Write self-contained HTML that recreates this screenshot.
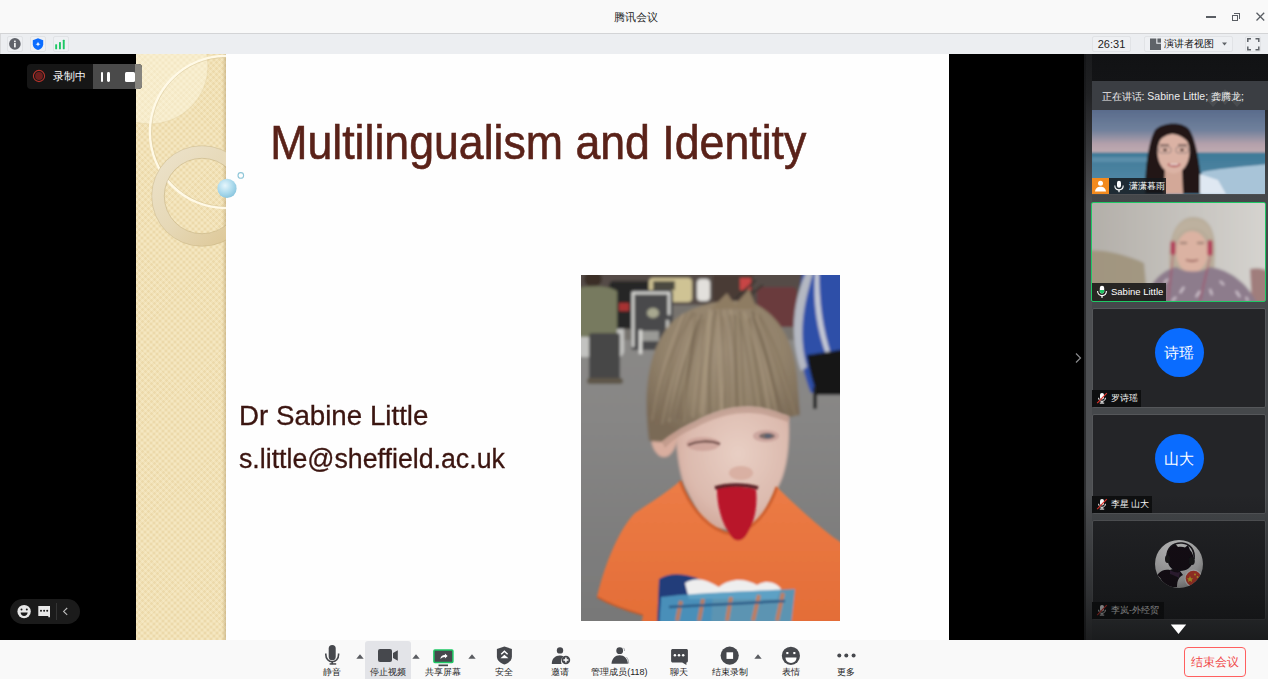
<!DOCTYPE html>
<html><head><meta charset="utf-8">
<style>
*{box-sizing:border-box;margin:0;padding:0}
html,body{width:1268px;height:679px;overflow:hidden;background:#000;font-family:"Liberation Sans",sans-serif}
.a{position:absolute}
#titlebar{left:0;top:0;width:1268px;height:33px;background:#f9f9f9}
#tline{left:0;top:33px;width:1268px;height:1px;background:#d3d4d6}
#strip{left:0;top:34px;width:1268px;height:20px;background:#eceef1}
.sbtn{border:1px solid #e1e3e6;border-radius:2px;background:#eef0f3}
#main{left:0;top:54px;width:1268px;height:586px;background:#000}
#bottom{left:0;top:640px;width:1268px;height:39px;background:#f9f9f9}
.lbl{font-size:10px;color:#1e1e1e;white-space:nowrap;text-align:center}
</style></head><body>
<div id="titlebar" class="a"></div>
<div class="a" style="left:614px;top:10.5px;font-size:11.4px;line-height:13px;color:#222;">腾讯会议</div>
<!-- window controls -->
<div class="a" style="left:1206px;top:16px;width:10px;height:1.5px;background:#5a5e64"></div>
<div class="a" style="left:1233.5px;top:13px;width:6.5px;height:6px;border-top:1.3px solid #5a5e64;border-right:1.3px solid #5a5e64"></div>
<div class="a" style="left:1231.5px;top:15px;width:6.5px;height:6px;border:1.4px solid #5a5e64"></div>
<svg class="a" style="left:1255px;top:11px" width="11" height="11" viewBox="0 0 11 11"><path d="M1.5 1.8L9.2 9.5M9.2 1.8L1.5 9.5" stroke="#5a5e64" stroke-width="1.3"/></svg>
<div id="tline" class="a"></div>
<div id="strip" class="a"></div>
<div class="a" style="left:0;top:34px;width:1px;height:20px;background:#d8d9db"></div>
<div class="a sbtn" style="left:7px;top:36px;width:16px;height:16px"></div>
<div class="a sbtn" style="left:30px;top:36px;width:16px;height:16px"></div>
<div class="a sbtn" style="left:53px;top:36px;width:16px;height:16px"></div>
<div class="a sbtn" style="left:1092px;top:36px;width:39px;height:16px"></div>
<div class="a sbtn" style="left:1144px;top:36px;width:89px;height:16px"></div>
<div class="a sbtn" style="left:1245px;top:36px;width:16px;height:16px"></div>

<!-- strip icons -->
<svg class="a" style="left:7px;top:36px" width="16" height="16" viewBox="0 0 16 16"><circle cx="7.9" cy="7.9" r="5.8" fill="#60636a"/><rect x="7.1" y="4.6" width="1.6" height="1.4" fill="#fff"/><rect x="7.1" y="6.8" width="1.6" height="4.6" fill="#fff"/></svg>
<svg class="a" style="left:30px;top:36px" width="16" height="16" viewBox="0 0 16 16"><path d="M8 2.2 L13.2 4.2 V8.5 C13.2 11.2 10.8 13.1 8 14 C5.2 13.1 2.8 11.2 2.8 8.5 V4.2 Z" fill="#0a6cff"/><path d="M8 5.8 L8.7 7.6 L10.5 8.2 L8.7 8.8 L8 10.6 L7.3 8.8 L5.5 8.2 L7.3 7.6Z" fill="#fff"/></svg>
<svg class="a" style="left:53px;top:36px" width="16" height="16" viewBox="0 0 16 16"><rect x="2.2" y="8.2" width="1.9" height="5" rx=".5" fill="#1ec864"/><rect x="6" y="6" width="1.9" height="7.2" rx=".5" fill="#1ec864"/><rect x="9.8" y="3.8" width="1.9" height="9.4" rx=".5" fill="#1ec864"/></svg>
<div class="a" style="left:1092px;top:37px;width:39px;height:15px;font-size:11px;line-height:15px;color:#222;text-align:center">26:31</div>
<svg class="a" style="left:1150px;top:38px" width="12" height="13" viewBox="0 0 12 13"><path d="M0 0.5 H6.3 V5.8 H11 V12 H0Z" fill="#5f6368"/><rect x="7.4" y="0.5" width="3.6" height="4.2" fill="#5f6368"/></svg>
<div class="a" style="left:1164px;top:36px;font-size:10px;line-height:15px;color:#111;white-space:nowrap">演讲者视图</div>
<svg class="a" style="left:1222px;top:42px" width="5" height="4" viewBox="0 0 5 4"><path d="M0 0.5H5L2.5 3.5Z" fill="#5f6368"/></svg>
<svg class="a" style="left:1247px;top:38px" width="13" height="13" viewBox="0 0 13 13"><path d="M0.8 4V0.8H4M8.5 0.8H11.8V4M11.8 8.5V11.8H8.5M4 11.8H0.8V8.5" fill="none" stroke="#5f6368" stroke-width="1.5"/></svg>

<div id="main" class="a"></div>

<!-- slide -->
<div class="a" style="left:136px;top:54px;width:813px;height:586px;background:#fefefe;overflow:hidden">
  <div class="a" style="left:0;top:0;width:90px;height:586px;background-color:#ecd9aa;background-image:repeating-linear-gradient(45deg, rgba(255,248,220,.26) 0 2.1px, transparent 2.1px 4.2px),repeating-linear-gradient(-45deg, rgba(255,248,220,.26) 0 2.1px, transparent 2.1px 4.2px)"></div><div class="a" style="left:86px;top:0;width:4px;height:586px;background:linear-gradient(90deg,rgba(190,165,110,0),rgba(175,150,100,.45))"></div>
  <svg class="a" style="left:0;top:0" width="100" height="260" viewBox="0 0 100 260">
    <defs><clipPath id="bc"><rect x="0" y="0" width="90" height="260"/></clipPath></defs>
    <g clip-path="url(#bc)">
      <circle cx="14" cy="12" r="58" fill="rgba(255,250,230,.45)" stroke="rgba(220,200,150,.35)" stroke-width="1"/>
      <circle cx="90" cy="78" r="76" fill="none" stroke="rgba(255,250,232,.95)" stroke-width="2.6"/>
      <circle cx="90" cy="78" r="74.5" fill="none" stroke="rgba(200,180,130,.35)" stroke-width="1"/>
      <defs><linearGradient id="rg" x1="0" y1="0" x2="1" y2="1"><stop offset="0" stop-color="#ece2ca"/><stop offset=".5" stop-color="#e6d8b6"/><stop offset="1" stop-color="#dcc592"/></linearGradient></defs><circle cx="66" cy="142" r="44" fill="none" stroke="url(#rg)" stroke-width="12.5"/><circle cx="66" cy="142" r="50.3" fill="none" stroke="rgba(185,165,115,.35)" stroke-width="1"/><circle cx="66" cy="142" r="37.7" fill="none" stroke="rgba(185,165,115,.45)" stroke-width="1"/>
    </g>
  </svg>
</div>
<svg class="a" style="left:214px;top:166px" width="34" height="34" viewBox="0 0 34 34">
  <defs><radialGradient id="bub" cx="40%" cy="35%" r="70%"><stop offset="0" stop-color="#e6f6fc"/><stop offset=".6" stop-color="#a9d9ec"/><stop offset="1" stop-color="#86c3dc"/></radialGradient></defs>
  <circle cx="13" cy="22.4" r="9.6" fill="url(#bub)"/>
  <circle cx="26.8" cy="9.4" r="2.8" fill="none" stroke="#8fc6d8" stroke-width="1.1"/>
</svg>

<!-- recording pill -->
<div class="a" style="left:27px;top:64px;width:115px;height:25px;border-radius:4px;background:#161616;overflow:hidden">
  <div class="a" style="left:66px;top:0;width:49px;height:25px;background:#4a4a4a"></div>
  <div class="a" style="left:108px;top:0;width:7px;height:25px;background:#86847e"></div>
</div>
<svg class="a" style="left:32px;top:69px" width="14" height="14" viewBox="0 0 14 14"><circle cx="7" cy="7" r="5.6" fill="none" stroke="#b3322b" stroke-width="1.1"/><circle cx="7" cy="7" r="3.9" fill="#6e1f1e"/></svg>
<div class="a" style="left:53px;top:70px;font-size:10.5px;line-height:13px;color:#fff;white-space:nowrap">录制中</div>
<div class="a" style="left:100.5px;top:71.5px;width:2.8px;height:10px;border-radius:1.4px;background:#fff"></div>
<div class="a" style="left:106.8px;top:71.5px;width:2.8px;height:10px;border-radius:1.4px;background:#fff"></div>
<div class="a" style="left:125px;top:72px;width:10px;height:9.6px;border-radius:1.5px;background:#fff"></div>
<!-- bottom-left pill -->
<div class="a" style="left:10px;top:599px;width:70px;height:25px;border-radius:12.5px;background:#1b1b1b"></div>
<svg class="a" style="left:17px;top:604px" width="15" height="15" viewBox="0 0 15 15"><circle cx="7.1" cy="7.6" r="6.7" fill="#e8e8e8"/><circle cx="4.5" cy="5.6" r="1" fill="#1b1b1b"/><circle cx="9.8" cy="5.6" r="1" fill="#1b1b1b"/><path d="M3.6 8.6H10.6C10.4 10.8 9 12 7.1 12S3.8 10.8 3.6 8.6Z" fill="#1b1b1b"/></svg>
<svg class="a" style="left:38px;top:605px" width="13" height="13" viewBox="0 0 13 13"><path d="M0.3 1H12V12.2H10.3V11H0.3Z" fill="#e8e8e8"/><circle cx="3" cy="5.7" r="1" fill="#1b1b1b"/><circle cx="6.1" cy="5.7" r="1" fill="#1b1b1b"/><circle cx="9.2" cy="5.7" r="1" fill="#1b1b1b"/></svg>
<div class="a" style="left:55.6px;top:603px;width:1px;height:17px;background:#343434"></div>
<svg class="a" style="left:62px;top:607px" width="7" height="9" viewBox="0 0 7 9"><path d="M5.2 1L1.6 4.4L5.2 7.8" fill="none" stroke="#bdbdbd" stroke-width="1.1"/></svg>
<div class="a" id="ttl" style="left:270px;top:116px;transform:scaleX(0.94);transform-origin:4px 0;font-size:47.5px;line-height:54px;color:#5a2219;-webkit-text-stroke:0.6px #5a2219;white-space:nowrap">Multilingualism and Identity</div>
<div class="a" id="nm" style="left:239px;top:400px;transform:scaleX(1.015);transform-origin:1px 0;font-size:27.3px;line-height:32px;color:#3b1510;-webkit-text-stroke:0.3px #3b1510;white-space:nowrap">Dr Sabine Little</div>
<div class="a" id="em" style="left:239px;top:442.5px;transform:scaleX(0.99);transform-origin:1px 0;font-size:27px;line-height:32px;color:#3b1510;-webkit-text-stroke:0.3px #3b1510;white-space:nowrap">s.little@sheffield.ac.uk</div>
<div class="a" id="photo" style="left:581px;top:275px;width:259px;height:346px;overflow:hidden">
<svg width="259" height="346" viewBox="0 0 259 346">
<defs>
<filter id="bl" x="-10%" y="-10%" width="120%" height="120%"><feGaussianBlur stdDeviation="1.5"/></filter>
<filter id="bl2" x="-10%" y="-10%" width="120%" height="120%"><feGaussianBlur stdDeviation="1"/></filter>
<linearGradient id="road" x1="0" y1="0" x2="0" y2="1"><stop offset="0" stop-color="#8c8a87"/><stop offset=".4" stop-color="#878685"/><stop offset="1" stop-color="#777777"/></linearGradient>
<radialGradient id="hairg" cx="50%" cy="35%" r="65%"><stop offset="0" stop-color="#a0907a"/><stop offset=".6" stop-color="#92826b"/><stop offset="1" stop-color="#7a6a56"/></radialGradient>
<radialGradient id="faceg" cx="55%" cy="40%" r="65%"><stop offset="0" stop-color="#e8cfc4"/><stop offset=".7" stop-color="#dcbaae"/><stop offset="1" stop-color="#cfa698"/></radialGradient>
<linearGradient id="shirtg" x1="0" y1="0" x2="0" y2="1"><stop offset="0" stop-color="#ec7c46"/><stop offset="1" stop-color="#e36d37"/></linearGradient>
</defs>
<g filter="url(#bl)">
<rect x="-5" y="-5" width="269" height="356" fill="url(#road)"/>
<rect x="-5" y="-5" width="269" height="42" fill="#544c46"/>
<rect x="-5" y="30" width="269" height="35" fill="#77736e"/>
<!-- silver car -->
<rect x="-5" y="20" width="48" height="62" rx="6" fill="#c2c2c0"/>
<!-- dark car -->
<rect x="28" y="6" width="44" height="48" rx="5" fill="#262628"/>
<rect x="38" y="28" width="10" height="8" fill="#a83030"/>
<!-- yellow car -->
<rect x="68" y="3" width="43" height="24" rx="4" fill="#cfc394"/>
<rect x="72" y="6" width="22" height="9" fill="#4c4a40"/>
<!-- rickshaw -->
<rect x="50" y="15" width="42" height="60" rx="3" fill="#4a4a4c"/>
<path d="M52 72V18H88V40" stroke="#dcdcd8" stroke-width="2.5" fill="none"/>
<ellipse cx="72" cy="38" rx="6" ry="5" fill="#a8a890"/>
<rect x="60" y="56" width="18" height="10" fill="#9a9a96"/>
<rect x="58" y="55" width="3" height="24" fill="#dcdcd8"/>
<rect x="85" y="45" width="3" height="30" fill="#c0c0bc"/>
<!-- white figure -->
<rect x="116" y="4" width="13" height="22" rx="4" fill="#e2e0dc"/>
<!-- red car -->
<rect x="132" y="0" width="40" height="28" fill="#4a3a36"/>
<rect x="176" y="12" width="40" height="40" rx="5" fill="#6a3a3c"/>
<rect x="159" y="3" width="11" height="12" fill="#c84444"/>
<path d="M145 32L175 5M152 34L182 10" stroke="#3a3430" stroke-width="2"/>
<!-- man -->
<ellipse cx="12" cy="4" rx="9" ry="8" fill="#3a2e28"/>
<path d="M-5 14C5 10 28 10 36 16V62H-5Z" fill="#777a5f"/>
<rect x="8" y="58" width="31" height="49" rx="3" fill="#464646"/>
<rect x="6" y="103" width="36" height="6" rx="3" fill="#5e5648"/>
<!-- backpack -->
<path d="M222 -5H264V118H230C222 100 214 60 216 30Z" fill="#2d50a8"/>
<path d="M226 -5H233C224 25 216 55 226 92L220 96C208 60 212 25 226 -5Z" fill="#b4b8c2"/>
<path d="M234 -5H238C238 30 242 55 250 80L246 82C236 55 232 30 234 -5Z" fill="#c4c8d4"/>
<path d="M226 80C240 78 252 76 264 74V120H236C232 108 228 95 226 80Z" fill="#151517"/>
<rect x="232" y="112" width="4" height="22" fill="#1a1a1a"/>
<!-- ear -->
<ellipse cx="83" cy="161" rx="13" ry="21" fill="#d9ae9f"/>
<!-- face -->
<path d="M95 132C120 128 180 127 207 132C210 168 206 196 197 212C190 224 184 238 178 254H124C118 238 110 224 103 210C97 192 94 166 95 138Z" fill="url(#faceg)"/>
<!-- hair -->
<path d="M68 166C62 120 66 75 90 48C110 28 150 22 172 28C195 38 212 62 216 100L219 140L209 142C196 137 186 134 180 133C166 131 156 132 147 134C131 138 121 143 114 147C100 153 90 160 81 167Z" fill="url(#hairg)"/>
<clipPath id="hc"><path d="M68 166C62 120 66 75 90 48C110 28 150 22 172 28C195 38 212 62 216 100L219 140L209 142C196 137 186 134 180 133C166 131 156 132 147 134C131 138 121 143 114 147C100 153 90 160 81 167Z"/></clipPath><g clip-path="url(#hc)"><path d="M103 38Q82 83 71 145" stroke="#b3a288" stroke-width="2.0" fill="none" opacity=".5"/><path d="M112 38Q83 85 70 148" stroke="#7f6e58" stroke-width="1.8" fill="none" opacity=".5"/><path d="M112 37Q94 86 75 150" stroke="#7f6e58" stroke-width="2.0" fill="none" opacity=".5"/><path d="M105 38Q88 83 81 144" stroke="#7f6e58" stroke-width="1.4" fill="none" opacity=".5"/><path d="M110 45Q93 89 81 149" stroke="#b3a288" stroke-width="1.3" fill="none" opacity=".5"/><path d="M116 42Q99 86 88 147" stroke="#b3a288" stroke-width="1.9" fill="none" opacity=".5"/><path d="M121 39Q104 83 89 143" stroke="#6d5d49" stroke-width="2.0" fill="none" opacity=".5"/><path d="M118 45Q109 86 96 144" stroke="#6d5d49" stroke-width="1.9" fill="none" opacity=".5"/><path d="M115 38Q110 83 101 145" stroke="#6d5d49" stroke-width="2.3" fill="none" opacity=".5"/><path d="M122 44Q109 88 99 147" stroke="#7f6e58" stroke-width="2.3" fill="none" opacity=".5"/><path d="M117 34Q102 82 103 147" stroke="#9a896f" stroke-width="2.2" fill="none" opacity=".5"/><path d="M126 45Q114 85 110 141" stroke="#9a896f" stroke-width="1.7" fill="none" opacity=".5"/><path d="M131 37Q116 82 112 143" stroke="#b3a288" stroke-width="1.4" fill="none" opacity=".5"/><path d="M125 37Q119 79 118 138" stroke="#7f6e58" stroke-width="1.6" fill="none" opacity=".5"/><path d="M125 37Q126 83 119 145" stroke="#9a896f" stroke-width="2.4" fill="none" opacity=".5"/><path d="M137 33Q123 78 119 138" stroke="#ad9c82" stroke-width="2.4" fill="none" opacity=".5"/><path d="M129 34Q126 80 122 141" stroke="#b3a288" stroke-width="2.5" fill="none" opacity=".5"/><path d="M137 37Q127 82 129 143" stroke="#9a896f" stroke-width="2.3" fill="none" opacity=".5"/><path d="M135 35Q126 80 129 142" stroke="#6d5d49" stroke-width="2.6" fill="none" opacity=".5"/><path d="M137 31Q137 75 136 135" stroke="#7f6e58" stroke-width="1.3" fill="none" opacity=".5"/><path d="M138 30Q135 77 142 140" stroke="#b3a288" stroke-width="2.5" fill="none" opacity=".5"/><path d="M143 35Q147 79 139 138" stroke="#ad9c82" stroke-width="1.9" fill="none" opacity=".5"/><path d="M138 30Q145 75 144 135" stroke="#75654f" stroke-width="1.9" fill="none" opacity=".5"/><path d="M142 42Q150 83 148 141" stroke="#7f6e58" stroke-width="1.6" fill="none" opacity=".5"/><path d="M149 31Q157 77 155 140" stroke="#b3a288" stroke-width="2.3" fill="none" opacity=".5"/><path d="M149 40Q156 80 155 137" stroke="#75654f" stroke-width="2.3" fill="none" opacity=".5"/><path d="M154 40Q155 82 157 141" stroke="#6d5d49" stroke-width="2.6" fill="none" opacity=".5"/><path d="M156 37Q157 82 160 142" stroke="#9a896f" stroke-width="2.6" fill="none" opacity=".5"/><path d="M159 36Q160 79 164 138" stroke="#75654f" stroke-width="1.9" fill="none" opacity=".5"/><path d="M161 39Q163 85 166 147" stroke="#9a896f" stroke-width="1.3" fill="none" opacity=".5"/><path d="M159 44Q169 87 176 146" stroke="#75654f" stroke-width="1.8" fill="none" opacity=".5"/><path d="M161 33Q172 82 180 146" stroke="#9a896f" stroke-width="2.5" fill="none" opacity=".5"/><path d="M164 35Q178 79 177 140" stroke="#9a896f" stroke-width="1.4" fill="none" opacity=".5"/><path d="M166 45Q179 86 185 143" stroke="#75654f" stroke-width="1.2" fill="none" opacity=".5"/><path d="M168 43Q174 87 184 148" stroke="#75654f" stroke-width="2.4" fill="none" opacity=".5"/><path d="M163 37Q180 82 189 142" stroke="#b3a288" stroke-width="2.0" fill="none" opacity=".5"/><path d="M172 35Q189 85 196 151" stroke="#7f6e58" stroke-width="1.8" fill="none" opacity=".5"/><path d="M175 41Q184 86 198 147" stroke="#ad9c82" stroke-width="2.3" fill="none" opacity=".5"/><path d="M173 44Q191 86 198 143" stroke="#6d5d49" stroke-width="2.0" fill="none" opacity=".5"/><path d="M171 41Q187 88 205 151" stroke="#7f6e58" stroke-width="1.3" fill="none" opacity=".5"/><path d="M171 36Q186 84 204 148" stroke="#6d5d49" stroke-width="1.8" fill="none" opacity=".5"/><path d="M178 42Q199 89 211 151" stroke="#7f6e58" stroke-width="2.3" fill="none" opacity=".5"/><path d="M178 39Q206 88 215 154" stroke="#7f6e58" stroke-width="2.4" fill="none" opacity=".5"/><path d="M176 42Q200 87 217 149" stroke="#9a896f" stroke-width="1.5" fill="none" opacity=".5"/></g>
<path d="M130 34L146 18L154 30L168 14L176 34Z" fill="#8e7b62"/>
</g>
<g filter="url(#bl2)">
<path d="M81 167C90 160 100 153 114 147C121 143 131 138 147 134C156 132 166 131 180 133C186 134 196 137 209 142L207 147C196 143 186 140 180 139C166 137 156 138 147 140C131 144 121 149 114 153C100 159 92 165 84 173Z" fill="#b08c7c" opacity=".5"/>
<!-- eyes -->
<ellipse cx="122" cy="169" rx="17" ry="7" fill="#c99c94" opacity=".7"/>
<path d="M107 170C116 166 129 165 139 169" stroke="#6a4a44" stroke-width="2.2" fill="none"/>
<ellipse cx="185" cy="161" rx="13" ry="6" fill="#c39a94" opacity=".7"/>
<ellipse cx="186" cy="161" rx="8" ry="3" fill="#7a6a68"/>
<ellipse cx="187" cy="161" rx="3.5" ry="2.2" fill="#5a6070"/>
<!-- nose -->
<ellipse cx="160" cy="198" rx="12" ry="7" fill="#d6aa9c" opacity=".8"/>
<!-- shirt -->
<path d="M60 351L62 340C46 336 28 330 16 322C22 296 36 256 54 238C72 226 88 216 99 206C110 236 130 256 150 259C172 257 188 236 196 212C212 228 236 250 252 262C258 266 264 270 264 274V351Z" fill="url(#shirtg)"/>
<path d="M99 206C110 236 130 256 150 259C172 257 188 236 196 212" stroke="#d0602f" stroke-width="3" fill="none"/>
<path d="M16 322C30 330 48 336 62 340" stroke="#c25a2c" stroke-width="1.5" fill="none"/>
<!-- tongue -->
<path d="M136 214C142 211 168 211 175 215C177 232 173 250 164 262C158 268 152 266 148 258C140 246 136 230 136 214Z" fill="#b9162c"/>
<path d="M134 213C146 209 164 209 177 213" stroke="#5a2226" stroke-width="3.5" fill="none"/>
<!-- print -->
<path d="M76 351L78 304C90 296 112 298 132 312L130 351Z" fill="#203c7a"/>
<path d="M104 308C116 300 128 306 138 312C150 302 166 304 176 310C186 304 196 308 200 314L196 324H108Z" fill="#eeeeee"/>
<path d="M78 351L80 322C110 318 170 316 214 314L210 351Z" fill="#4c98c0" opacity=".9"/>
<path d="M96 346L100 326M118 346L122 324M146 346L150 322M172 346L178 320M196 346L202 318" stroke="#e8763e" stroke-width="4" opacity=".7"/>
<path d="M88 332L204 326" stroke="#2b5c88" stroke-width="2.5"/>
</g>
</svg>
</div>

<!-- right panel -->
<div class="a" id="panel" style="left:1084px;top:54px;width:184px;height:586px;overflow:hidden;background:linear-gradient(180deg,#111214 0px,#131416 27px,#2a2c2f 60px,#424548 130px,#45484b 150px)">
  <div class="a" style="left:0;top:0;width:2px;height:586px;background:linear-gradient(180deg,#141517 0,#1d1e20 60px,#2b2c2e 150px,#2b2c2e 586px)"></div>
  <div class="a" style="left:2px;top:0;width:6px;height:586px;background:linear-gradient(180deg,#1a1b1d 0,#202123 40px,#2c2d30 70px,#4d4f52 150px,#4d4f52 586px)"></div>
  <!-- speaker bar -->
  <div class="a" style="left:8px;top:27px;width:176px;height:29px;background:#3b3e43"></div>
  <svg class="a" style="left:120px;top:31px" width="40" height="25" viewBox="0 0 40 25"><path d="M2 14L9 6L16 14L9 22Z M14 12L21 4L28 12L21 20Z M26 14L33 6L40 14L33 22Z" fill="#5a5d62" opacity=".45"/></svg>
  <div class="a" style="left:17.5px;top:36px;font-size:10px;line-height:13px;color:#ececec;white-space:nowrap">正在讲话<span style="font-size:10.5px">: Sabine Little; </span>龚腾龙<span style="font-size:10.5px">;</span></div>
  <!-- card1 video -->
  <div class="a" id="v1" style="left:8px;top:56px;width:173px;height:84px;overflow:hidden">
<svg width="173" height="84" viewBox="0 0 173 84">
<defs><filter id="vb" x="-5%" y="-5%" width="110%" height="110%"><feGaussianBlur stdDeviation="1"/></filter>
<linearGradient id="sky" x1="0" y1="0" x2="0" y2="1"><stop offset="0" stop-color="#56698a"/><stop offset=".5" stop-color="#71819c"/><stop offset=".78" stop-color="#b3a0ab"/><stop offset="1" stop-color="#c2adb2"/></linearGradient>
<linearGradient id="sea" x1="0" y1="0" x2="0" y2="1"><stop offset="0" stop-color="#3f7a98"/><stop offset="1" stop-color="#5a8eab"/></linearGradient></defs>
<g filter="url(#vb)">
<rect x="-3" y="-3" width="179" height="47" fill="url(#sky)"/>
<rect x="-3" y="42.5" width="179" height="45" fill="url(#sea)"/>
<path d="M0 47H60V52H0Z" fill="#6a9ab4" opacity=".6"/>
<path d="M110 62C130 58 160 56 176 54V87H110Z" fill="#a8c4d8"/>
<path d="M53 84C53 60 56 32 63 20C70 12 90 11 97 19C105 30 108 58 111 84Z" fill="#201919"/>
<path d="M73 60H90L91 84H72Z" fill="#d3a898"/>
<ellipse cx="81.5" cy="42" rx="16" ry="21.5" fill="#dbb2a4"/>
<path d="M64 36C65 22 72 17 81 17C91 17 98 23 99 36C94 28 86 24 80 24C73 25 67 29 64 36Z" fill="#201919"/>
<path d="M108 64L126 70L134 84H108Z" fill="#dfe8f2"/>
<rect x="67" y="37" width="12" height="6" rx="2" fill="none" stroke="#8c7c7a" stroke-width=".8"/>
<rect x="84" y="37" width="12" height="6" rx="2" fill="none" stroke="#8c7c7a" stroke-width=".8"/>
<path d="M76 54C80 57 85 57 88 54" stroke="#b86060" stroke-width="2.2" fill="none"/><path d="M78 54.5H86" stroke="#f0e0e0" stroke-width="1"/><path d="M68 35H77M86 35H95" stroke="#3a2a28" stroke-width="1.2"/><ellipse cx="73" cy="40" rx="2" ry="1.2" fill="#3a2a28"/><ellipse cx="90" cy="40" rx="2" ry="1.2" fill="#3a2a28"/>
</g>
</svg>
<div class="a" style="left:0;top:68px;width:17px;height:16px;background:#f28a1e"></div>
<svg class="a" style="left:0;top:68px" width="17" height="16" viewBox="0 0 17 16"><circle cx="8.5" cy="5.2" r="2.5" fill="#fff"/><path d="M3 13.5C3.5 10 5.8 8.7 8.5 8.7S13.5 10 14 13.5Z" fill="#fff"/></svg>
<div class="a" style="left:17px;top:68px;width:57px;height:16px;background:rgba(20,22,26,.82)"></div>
<svg class="a" style="left:21px;top:70px" width="12" height="13" viewBox="0 0 12 13"><rect x="4" y="0.8" width="4" height="7" rx="2" fill="#fff"/><path d="M1.8 5.6C1.8 8.4 3.6 9.9 6 9.9S10.2 8.4 10.2 5.6" fill="none" stroke="#fff" stroke-width="1.1"/><rect x="5.4" y="9.8" width="1.2" height="2.4" fill="#fff"/></svg>
<div class="a" style="left:37px;top:70px;font-size:8.8px;line-height:12px;color:#fff;white-space:nowrap">潇潇暮雨</div>
</div>
  <div class="a" style="left:8px;top:140px;width:173px;height:1px;background:#4d4f52"></div>
  <!-- card2 -->
  <div class="a" id="v2" style="left:8px;top:149px;width:173px;height:98px;overflow:hidden">
<svg width="173" height="98" viewBox="0 0 173 98">
<defs><filter id="vb2" x="-5%" y="-5%" width="110%" height="110%"><feGaussianBlur stdDeviation="1.6"/></filter>
<linearGradient id="wall" x1="0" y1="0" x2="1" y2="0"><stop offset="0" stop-color="#b2aea8"/><stop offset=".5" stop-color="#c4c1bc"/><stop offset="1" stop-color="#d6d4d0"/></linearGradient></defs>
<g filter="url(#vb2)">
<rect x="-4" y="-4" width="181" height="106" fill="url(#wall)"/>
<path d="M-4 48C12 46 34 52 52 60L56 102H-4Z" fill="#9d9078" opacity=".85"/>
<path d="M158 66C166 64 172 66 177 68V102H160Z" fill="#8a5a58" opacity=".7"/>
<path d="M78 72C75 42 80 16 100 14C118 13 124 30 123 50L122 74Z" fill="#b8ac9a"/>
<ellipse cx="100" cy="49" rx="16" ry="21" fill="#dbb2a2"/>
<path d="M82 40C82 24 90 17 101 17C113 17 121 24 120 40C116 30 108 24 100 25C93 25 86 30 82 40Z" fill="#bdb19f"/>
<rect x="78.5" y="38" width="5" height="14" rx="2" fill="#b23a58"/>
<rect x="115.5" y="37" width="5" height="16" rx="2" fill="#b23a58"/>
<path d="M50 102C58 80 68 68 84 64C94 70 108 70 118 64C138 67 156 80 166 102Z" fill="#8d7b8c"/>
<path d="M62 92L66 86M72 80L76 76M88 90L92 84M128 78L132 82M144 88L148 94M104 94L108 88M118 86L120 92M154 94L156 98M80 98L84 94" stroke="#e2d8e0" stroke-width="1.6"/>
<path d="M88 40H95M105 40H112" stroke="#7a6058" stroke-width="1.5"/>
<path d="M94 57C97 58 103 58 106 57" stroke="#8a4a48" stroke-width="1.8" fill="none"/>
<path d="M81 52L76 98M118 54L108 98" stroke="#b03050" stroke-width=".8" fill="none"/>
</g>
</svg>
<div class="a" style="left:0;top:80px;width:74px;height:18px;background:rgba(22,22,22,.88)"></div>
<svg class="a" style="left:4px;top:82px" width="12" height="14" viewBox="0 0 12 14"><rect x="3.8" y="0.8" width="4.4" height="7.6" rx="2.2" fill="#fff"/><path d="M3.8 5H8.2V6.2C8.2 7.4 7.2 8.4 6 8.4S3.8 7.4 3.8 6.2Z" fill="#1ec864"/><path d="M1.6 6C1.6 9 3.6 10.6 6 10.6S10.4 9 10.4 6" fill="none" stroke="#fff" stroke-width="1.1"/><rect x="5.4" y="10.5" width="1.2" height="2.4" fill="#fff"/></svg>
<div class="a" style="left:19px;top:83px;font-size:9.5px;line-height:12px;color:#fff;white-space:nowrap">Sabine Little</div>
</div>
  <div class="a" style="left:7px;top:148px;width:175px;height:100px;border:1.6px solid #1fc865;border-radius:2px"></div>
  <!-- card3 -->
  <div class="a" style="left:8px;top:254px;width:174px;height:100px;background:#242528;border:1px solid #55575a;border-radius:2px"></div>
  <div class="a" style="left:70.5px;top:274px;width:49px;height:49px;border-radius:50%;background:#0a6cff"></div>
  <div class="a" style="left:70px;top:290px;width:49px;font-size:15px;line-height:18px;color:#fff;text-align:center;white-space:nowrap">诗瑶</div>
  <div class="a" style="left:8px;top:336px;width:49px;height:17px;background:#0e0f10"><svg class="a" style="left:4px;top:2px" width="12" height="12" viewBox="0 0 12 12"><rect x="4" y="1" width="4" height="6.5" rx="2" fill="#fff"/><path d="M2.6 5.8C2.6 8 4.1 9.3 6 9.3S9.4 8 9.4 5.8" fill="none" stroke="#fff" stroke-width="1"/><rect x="5.5" y="9.2" width="1" height="1.8" fill="#fff"/><rect x="3.8" y="10.6" width="4.4" height="1" fill="#fff"/><path d="M1.2 11.2L10.8 1.2" stroke="#e0342c" stroke-width="1.2"/></svg><div class="a" style="left:19px;top:2px;font-size:8.8px;line-height:12px;color:#fff;white-space:nowrap">罗诗瑶</div></div>
  <!-- card4 -->
  <div class="a" style="left:8px;top:360px;width:174px;height:100px;background:#242528;border:1px solid #55575a;border-radius:2px"></div>
  <div class="a" style="left:70.5px;top:380px;width:49px;height:49px;border-radius:50%;background:#0a6cff"></div>
  <div class="a" style="left:70px;top:396px;width:49px;font-size:15px;line-height:18px;color:#fff;text-align:center;white-space:nowrap">山大</div>
  <div class="a" style="left:8px;top:442px;width:60px;height:17px;background:#0e0f10"><svg class="a" style="left:4px;top:2px" width="12" height="12" viewBox="0 0 12 12"><rect x="4" y="1" width="4" height="6.5" rx="2" fill="#fff"/><path d="M2.6 5.8C2.6 8 4.1 9.3 6 9.3S9.4 8 9.4 5.8" fill="none" stroke="#fff" stroke-width="1"/><rect x="5.5" y="9.2" width="1" height="1.8" fill="#fff"/><rect x="3.8" y="10.6" width="4.4" height="1" fill="#fff"/><path d="M1.2 11.2L10.8 1.2" stroke="#e0342c" stroke-width="1.2"/></svg><div class="a" style="left:19px;top:2px;font-size:8.8px;line-height:12px;color:#fff;white-space:nowrap">李星 山大</div></div>
  <!-- card5 -->
  <div class="a" style="left:8px;top:466px;width:174px;height:100px;background:#242528;border:1px solid #55575a;border-radius:2px"></div>
  <div class="a" id="av5" style="left:71px;top:486px;width:48px;height:48px;border-radius:50%;overflow:hidden">
<svg width="48" height="48" viewBox="0 0 48 48"><defs><radialGradient id="avg" cx="40%" cy="35%" r="70%"><stop offset="0" stop-color="#ededed"/><stop offset=".75" stop-color="#cfcfcf"/><stop offset="1" stop-color="#a8a8a8"/></radialGradient><filter id="avb"><feGaussianBlur stdDeviation=".5"/></filter></defs>
<rect width="48" height="48" fill="url(#avg)"/>
<g filter="url(#avb)">
<path d="M13 16C12 11 14 8 17 6L20 3.5L23 7C25 6.5 28 6.5 30 7.5L33 5L35 10C38 13 39 17 38 21C37 27 32 31 25 31C18 31 13 27 13 21Z" fill="#120f14"/>
<path d="M12 17C12 8 18 2.5 27 3C35 3.5 40 10 39 19" fill="none" stroke="#1a171c" stroke-width="1.6"/>
<ellipse cx="12.5" cy="19" rx="2.5" ry="4" fill="#1c1a1f"/>
<ellipse cx="37" cy="21" rx="2.8" ry="4" fill="#1c1a1f"/>
<path d="M3 34C6 30 11 29 15 30C18 28 22 29 25 31L28 35C24 37 22 40 22 47H8C8 42 6 38 3 36Z" fill="#141116"/>
<path d="M15 30C18 32 22 33 25 32L24 38C21 36 18 35 15 34Z" fill="#3a2240"/>
<circle cx="38.5" cy="38.5" r="9" fill="#eaeaea"/>
<circle cx="38.5" cy="38.5" r="7.8" fill="#d8402e"/>
<path d="M35 36L36 38.2L38.3 38.4L36.6 39.8L37.1 42L35 40.8L33 42L33.5 39.8L31.8 38.4L34 38.2Z" fill="#f5d030"/>
<circle cx="40" cy="34.5" r=".9" fill="#f5d030"/><circle cx="42.5" cy="37" r=".9" fill="#f5d030"/>
</g></svg></div>
  <div class="a" style="left:8px;top:548px;width:72px;height:17px;background:#0e0f10"><svg class="a" style="left:4px;top:2px" width="12" height="12" viewBox="0 0 12 12"><rect x="4" y="1" width="4" height="6.5" rx="2" fill="#fff"/><path d="M2.6 5.8C2.6 8 4.1 9.3 6 9.3S9.4 8 9.4 5.8" fill="none" stroke="#fff" stroke-width="1"/><rect x="5.5" y="9.2" width="1" height="1.8" fill="#fff"/><rect x="3.8" y="10.6" width="4.4" height="1" fill="#fff"/><path d="M1.2 11.2L10.8 1.2" stroke="#e0342c" stroke-width="1.2"/></svg><div class="a" style="left:19px;top:2px;font-size:8.8px;line-height:12px;color:#fff;white-space:nowrap">李岚-外经贸</div></div>
  <!-- bottom fade -->
  <div class="a" style="left:0;top:440px;width:184px;height:146px;background:linear-gradient(180deg,rgba(10,11,12,0) 0,rgba(10,11,12,.2) 40px,rgba(10,11,12,.45) 100px,rgba(10,11,12,.72) 146px)"></div>
  <svg class="a" style="left:86px;top:570px" width="17" height="11" viewBox="0 0 17 11"><path d="M0.8 0.5H16.2L8.5 10Z" fill="#fff"/></svg>
</div>
<svg class="a" style="left:1074px;top:352px" width="9" height="12" viewBox="0 0 9 12"><path d="M2 1.5L6.5 6L2 10.5" fill="none" stroke="#8a8b8d" stroke-width="1.2"/></svg>
<div id="bottom" class="a"></div>
<!-- bottom toolbar -->
<div class="a" style="left:365px;top:640.5px;width:46px;height:38.5px;background:#e3e4e8;border-radius:3px 3px 0 0"></div>
<svg class="a" style="left:324px;top:644px" width="16" height="22" viewBox="0 0 16 22"><rect x="4.7" y="1" width="7" height="15.2" rx="3.5" fill="#46484d"/><path d="M1.8 9.5V10.5C1.8 14.9 4.7 17.8 8.2 17.8S14.6 14.9 14.6 10.5V9.5" fill="none" stroke="#46484d" stroke-width="1.6"/><rect x="7.4" y="17.6" width="1.6" height="2.6" fill="#46484d"/><rect x="5.6" y="19.2" width="6.6" height="1.5" fill="#46484d"/></svg>
<div class="a lbl" style="left:297.2px;top:666px;width:70px;font-size:9px;line-height:12px">静音</div>
<svg class="a" style="left:356.2px;top:654px" width="8" height="5" viewBox="0 0 8 5"><path d="M0.3 4.8H7.7L4 0.3Z" fill="#5a5c61"/></svg>
<svg class="a" style="left:377px;top:648px" width="22" height="15" viewBox="0 0 22 15"><rect x="1" y="1" width="14" height="13.1" rx="2" fill="#46484d"/><path d="M16 5L20.8 2.2V12.8L16 10Z" fill="#46484d"/></svg>
<div class="a lbl" style="left:352.7px;top:666px;width:70px;font-size:9px;line-height:12px">停止视频</div>
<svg class="a" style="left:411.8px;top:654px" width="8" height="5" viewBox="0 0 8 5"><path d="M0.3 4.8H7.7L4 0.3Z" fill="#5a5c61"/></svg>
<svg class="a" style="left:433px;top:648.5px" width="21" height="18" viewBox="0 0 21 18"><rect x="0.9" y="0.9" width="19" height="12.6" rx="1" fill="#46484d" stroke="#1ec864" stroke-width="1.5"/><path d="M7.4 10C7.6 7.4 9.3 6.1 11.9 6.1V4.4L14.6 7L11.9 9.6V7.9C10 7.9 8.6 8.6 7.4 10Z" fill="#fff"/><rect x="5.5" y="15.5" width="9.5" height="1.7" fill="#46484d"/></svg>
<div class="a lbl" style="left:408.4px;top:666px;width:70px;font-size:9px;line-height:12px">共享屏幕</div>
<svg class="a" style="left:467.5px;top:654px" width="8" height="5" viewBox="0 0 8 5"><path d="M0.3 4.8H7.7L4 0.3Z" fill="#5a5c61"/></svg>
<svg class="a" style="left:496px;top:646px" width="17" height="19" viewBox="0 0 17 19"><path d="M8.4 0.6L15.9 2.9V10.5C15.9 14.6 12.2 17.3 8.4 18.6C4.6 17.3 0.9 14.6 0.9 10.5V2.9Z" fill="#46484d"/><path d="M5.2 8.2L8.4 5.2L11.6 8.2" fill="none" stroke="#fff" stroke-width="1.4"/><path d="M4.4 12.3H12.4L8.4 8.7Z" fill="#fff"/></svg>
<div class="a lbl" style="left:469.3px;top:666px;width:70px;font-size:9px;line-height:12px">安全</div>
<svg class="a" style="left:551px;top:646px" width="21" height="19" viewBox="0 0 21 19"><circle cx="9" cy="4.4" r="3.2" fill="#46484d"/><path d="M0.8 18C0.8 12.5 4.3 9.6 9 9.6C10.4 9.6 11.6 9.9 12.7 10.4C11 11.4 10 13.3 10 15.3C10 16.3 10.3 17.2 10.7 18Z" fill="#46484d"/><circle cx="14.9" cy="14" r="4.3" fill="#46484d"/><path d="M14.9 11.5V16.5M12.4 14H17.4" stroke="#fff" stroke-width="1.5"/></svg>
<div class="a lbl" style="left:525.1px;top:666px;width:70px;font-size:9px;line-height:12px">邀请</div>
<svg class="a" style="left:611px;top:646px" width="20" height="19" viewBox="0 0 20 19"><circle cx="8.7" cy="4.7" r="3.4" fill="#46484d"/><path d="M0.5 17.8C0.8 12.5 4.3 9.3 8.7 9.3S16.6 12.5 16.9 17.8Z" fill="#46484d"/><path d="M12.3 1.8C13.3 2.6 13.6 3.6 13.5 4.9M15.5 11.2C17 12.8 17.6 15 17.7 17.6" fill="none" stroke="#9a9ca0" stroke-width=".9"/></svg>
<div class="a lbl" style="left:579.4px;top:666px;width:80px;font-size:9px;line-height:12px">管理成员(118)</div>
<svg class="a" style="left:670px;top:648px" width="19" height="18" viewBox="0 0 19 18"><path d="M2.7 1H16.4C17.3 1 17.9 1.6 17.9 2.5V12.9C17.9 13.8 17.3 14.4 16.4 14.4V17L12.2 14.4H2.7C1.8 14.4 1.1 13.8 1.1 12.9V2.5C1.1 1.6 1.8 1 2.7 1Z" fill="#46484d"/><circle cx="4.9" cy="7.3" r="1.25" fill="#fff"/><circle cx="9" cy="7.3" r="1.25" fill="#fff"/><circle cx="13.2" cy="7.3" r="1.25" fill="#fff"/></svg>
<div class="a lbl" style="left:644.3px;top:666px;width:70px;font-size:9px;line-height:12px">聊天</div>
<svg class="a" style="left:720px;top:646px" width="20" height="20" viewBox="0 0 20 20"><circle cx="9.7" cy="9.6" r="9.1" fill="#46484d"/><rect x="6.5" y="6.3" width="6.6" height="6.6" fill="#fff"/></svg>
<div class="a lbl" style="left:694.5px;top:666px;width:70px;font-size:9px;line-height:12px">结束录制</div>
<svg class="a" style="left:753.9px;top:654px" width="8" height="5" viewBox="0 0 8 5"><path d="M0.3 4.8H7.7L4 0.3Z" fill="#5a5c61"/></svg>
<svg class="a" style="left:781px;top:646px" width="20" height="20" viewBox="0 0 20 20"><circle cx="9.9" cy="9.8" r="9.1" fill="#46484d"/><rect x="5.3" y="6" width="2.1" height="2.1" fill="#fff"/><rect x="12.3" y="6" width="2.1" height="2.1" fill="#fff"/><path d="M4.5 11.5H15.5C15.5 14.8 13 16.9 10 16.9S4.5 14.8 4.5 11.5Z" fill="#fff"/></svg>
<div class="a lbl" style="left:755.5px;top:666px;width:70px;font-size:9px;line-height:12px">表情</div>
<svg class="a" style="left:836px;top:652px" width="20" height="7" viewBox="0 0 20 7"><circle cx="3.3" cy="3.4" r="2" fill="#46484d"/><circle cx="10.3" cy="3.4" r="2" fill="#46484d"/><circle cx="17.6" cy="3.4" r="2" fill="#46484d"/></svg>
<div class="a lbl" style="left:811.4px;top:666px;width:70px;font-size:9px;line-height:12px">更多</div>
<div class="a" style="left:1184px;top:647px;width:62px;height:30px;border:1px solid #ff6060;border-radius:4px;font-size:12px;line-height:28px;color:#f04848;text-align:center">结束会议</div>
</body></html>
